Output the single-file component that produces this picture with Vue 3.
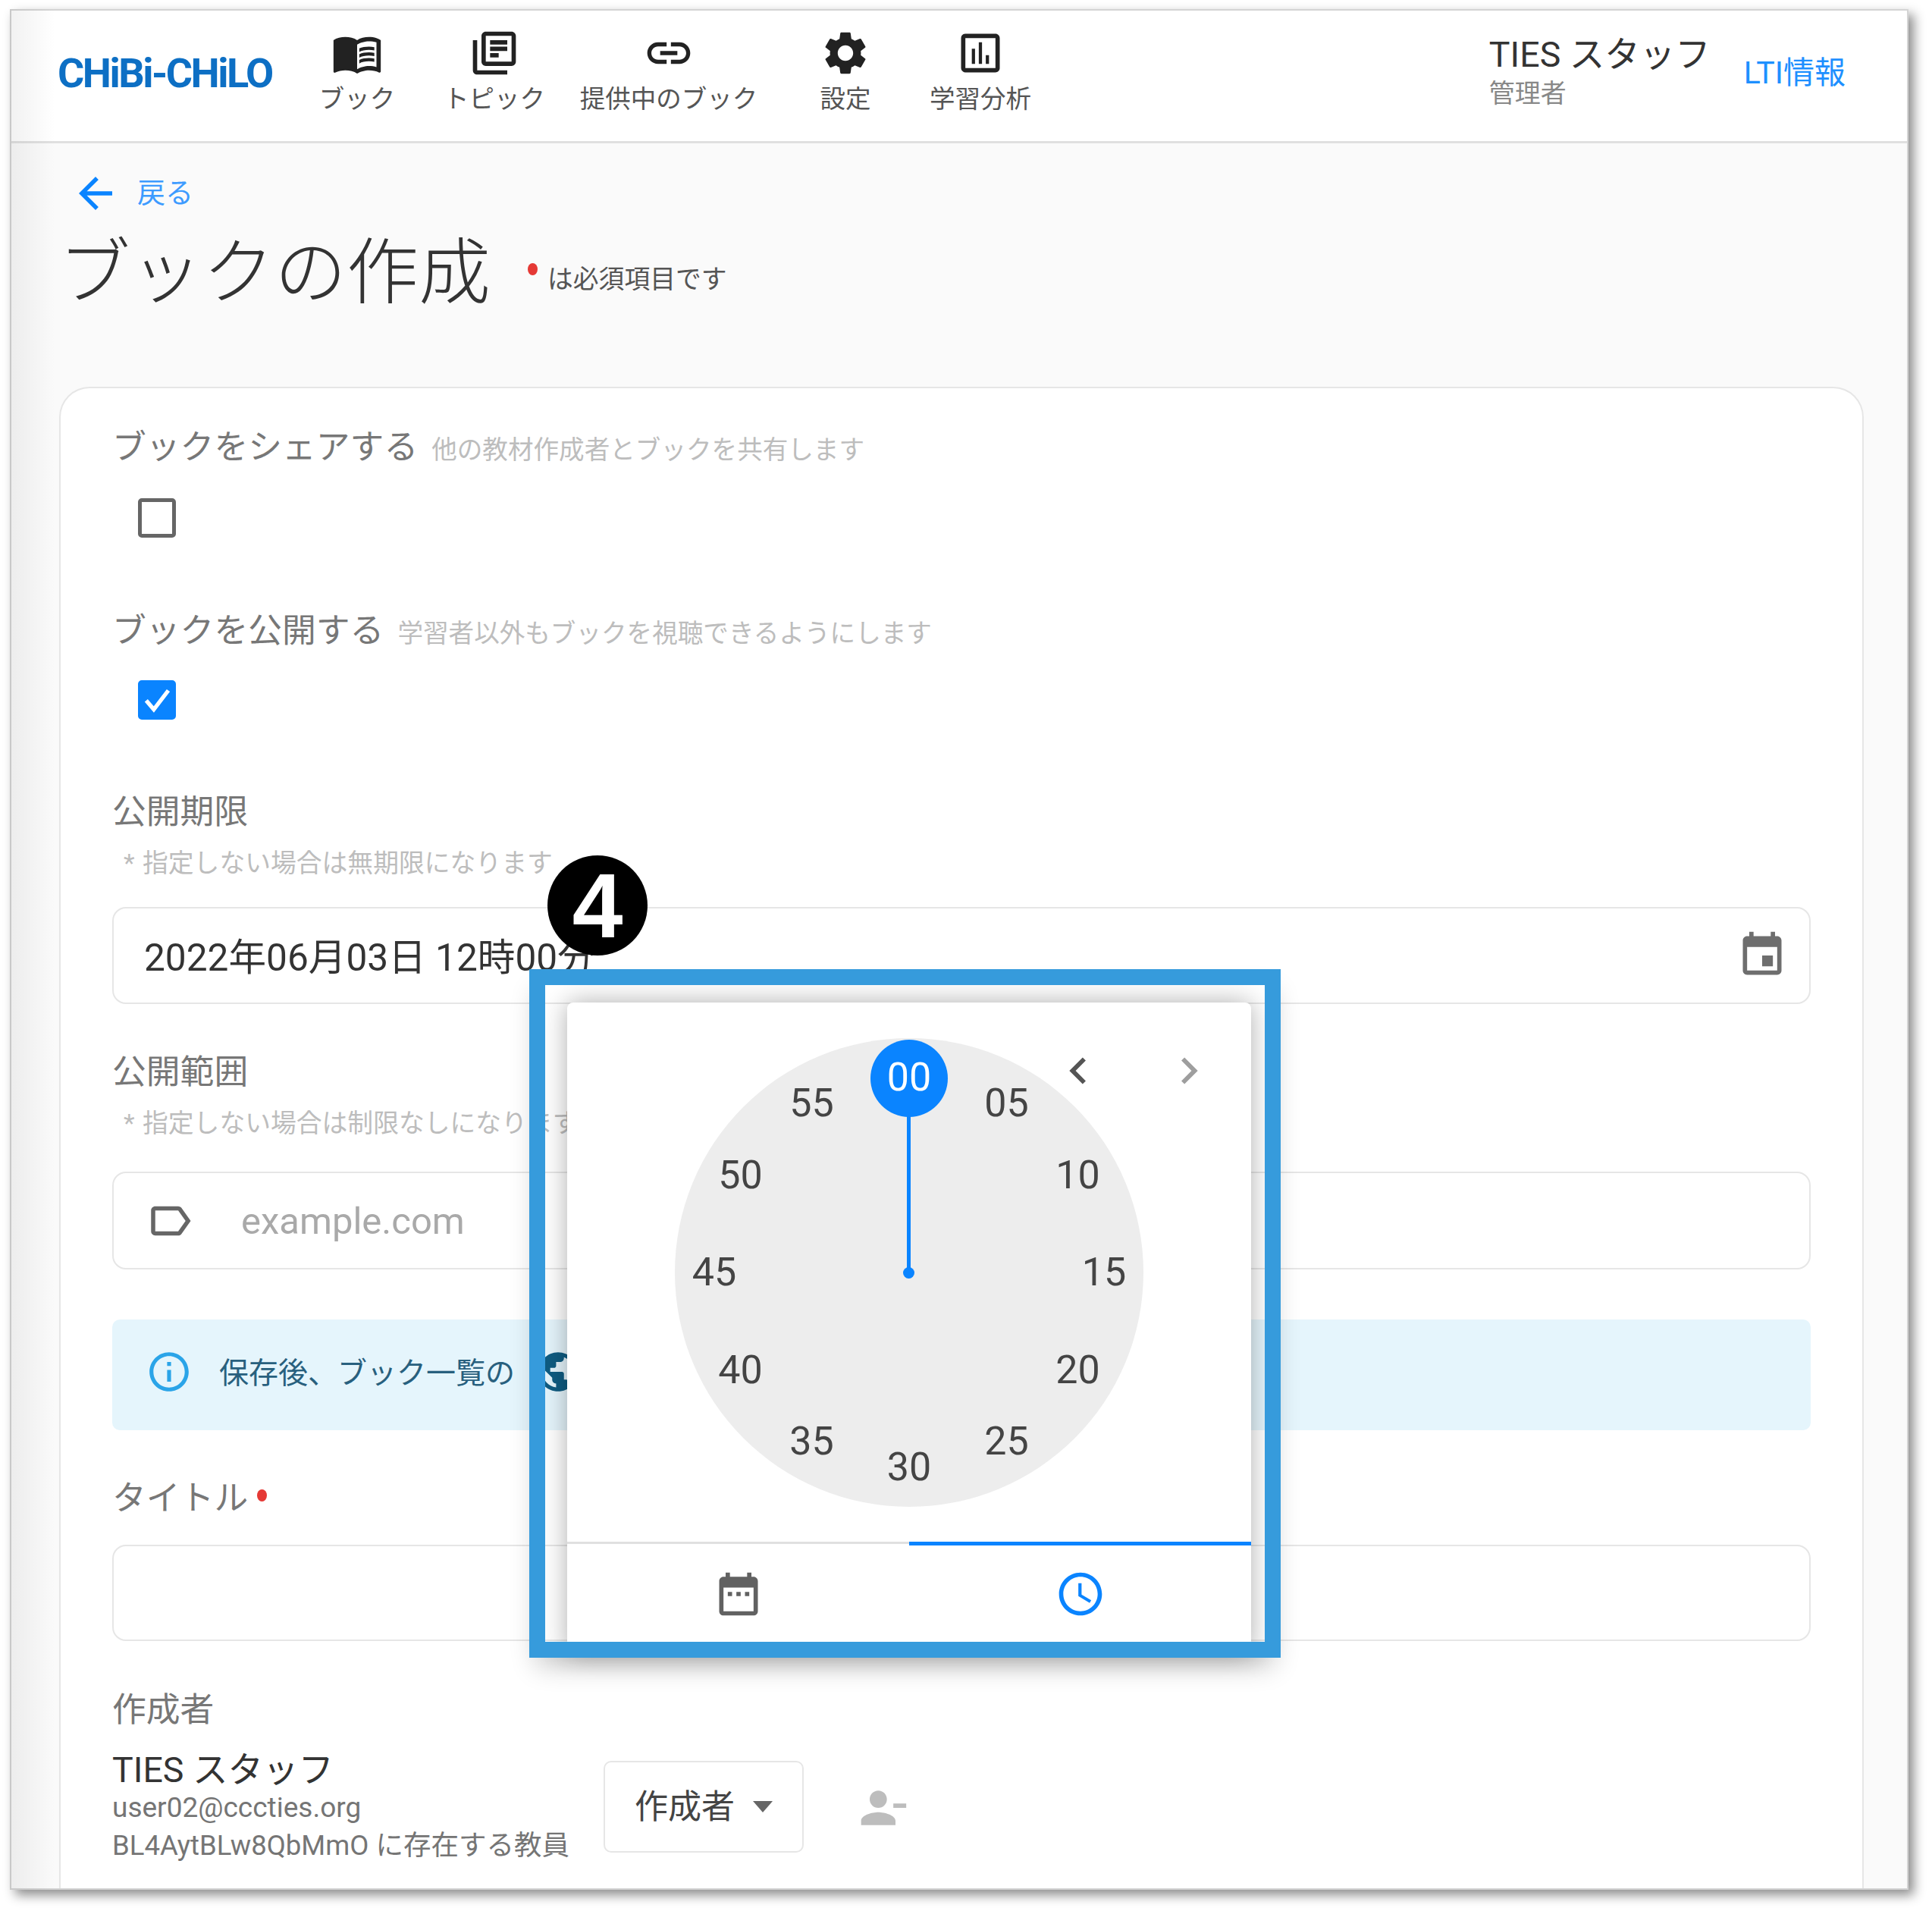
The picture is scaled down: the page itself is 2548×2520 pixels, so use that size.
<script setup>
const nav = [
  { label: 'ブック', d: ['M21 5c-1.11-.35-2.33-.5-3.5-.5-1.95 0-4.05.4-5.5 1.5-1.45-1.1-3.55-1.5-5.5-1.5S2.45 4.9 1 6v14.65c0 .25.25.5.5.5.1 0 .15-.05.25-.05C3.1 20.45 5.05 20 6.5 20c1.95 0 4.05.4 5.5 1.5 1.35-.85 3.8-1.5 5.5-1.5 1.65 0 3.35.3 4.75 1.05.1.05.15.05.25.05.25 0 .5-.25.5-.5V6c-.6-.45-1.25-.75-2-1zm0 13.5c-1.1-.35-2.3-.5-3.5-.5-1.7 0-4.15.65-5.5 1.5V8c1.35-.85 3.8-1.5 5.5-1.5 1.2 0 2.4.15 3.5.5v11.5z', 'M17.5 10.5c.88 0 1.73.09 2.5.26V9.24c-.79-.15-1.64-.24-2.5-.24-1.7 0-3.24.29-4.5.83v1.66c1.13-.64 2.7-.99 4.5-.99zM13 12.49v1.66c1.13-.64 2.7-.99 4.5-.99.88 0 1.73.09 2.5.26V11.9c-.79-.15-1.64-.24-2.5-.24-1.7 0-3.24.3-4.5.83zM17.5 14.33c-1.7 0-3.24.29-4.5.83v1.66c1.13-.64 2.7-.99 4.5-.99.88 0 1.73.09 2.5.26v-1.52c-.79-.16-1.64-.24-2.5-.24z'] },
  { label: 'トピック', d: ['M4 6H2v14c0 1.1.9 2 2 2h14v-2H4V6zm16-4H8c-1.1 0-2 .9-2 2v12c0 1.1.9 2 2 2h12c1.1 0 2-.9 2-2V4c0-1.1-.9-2-2-2zm0 14H8V4h12v12zM10 9h8v2h-8zm0 3h4v2h-4zm0-6h8v2h-8z'] },
  { label: '提供中のブック', d: ['M3.9 12c0-1.71 1.39-3.1 3.1-3.1h4V7H7c-2.76 0-5 2.24-5 5s2.24 5 5 5h4v-1.9H7c-1.71 0-3.1-1.39-3.1-3.1zM8 13h8v-2H8v2zm9-6h-4v1.9h4c1.71 0 3.1 1.39 3.1 3.1s-1.39 3.1-3.1 3.1h-4V17h4c2.76 0 5-2.24 5-5s-2.24-5-5-5z'] },
  { label: '設定', d: ['M19.14 12.94c.04-.3.06-.61.06-.94 0-.32-.02-.64-.07-.94l2.03-1.58c.18-.14.23-.41.12-.61l-1.92-3.32c-.12-.22-.37-.29-.59-.22l-2.39.96c-.5-.38-1.03-.7-1.62-.94l-.36-2.54c-.04-.24-.24-.41-.48-.41h-3.84c-.24 0-.43.17-.47.41l-.36 2.54c-.59.24-1.13.57-1.62.94l-2.39-.96c-.22-.08-.47 0-.59.22L2.74 8.87c-.12.21-.08.47.12.61l2.03 1.58c-.05.3-.09.63-.09.94s.02.64.07.94l-2.03 1.58c-.18.14-.23.41-.12.61l1.92 3.32c.12.22.37.29.59.22l2.39-.96c.5.38 1.03.7 1.62.94l.36 2.54c.05.24.24.41.48.41h3.84c.24 0 .44-.17.47-.41l.36-2.54c.59-.24 1.13-.56 1.62-.94l2.39.96c.22.08.47 0 .59-.22l1.92-3.32c.12-.22.07-.47-.12-.61l-2.01-1.58zM12 15.6c-1.98 0-3.6-1.62-3.6-3.6s1.62-3.6 3.6-3.6 3.6 1.62 3.6 3.6-1.62 3.6-3.6 3.6z'] },
  { label: '学習分析', d: ['M9.5 17H8v-7h1.5v7zm3.25 0h-1.5V7h1.5v10zM16 17h-1.5v-4H16v4zm3 2H5V5h14v14zm0-16H5c-1.1 0-2 .9-2 2v14c0 1.1.9 2 2 2h14c1.1 0 2-.9 2-2V5c0-1.1-.9-2-2-2z'] }
]

const R = 257
const CX = 309
const CY = 309
const minutes = ['00', '05', '10', '15', '20', '25', '30', '35', '40', '45', '50', '55'].map((text, i) => {
  const a = (i * 30 * Math.PI) / 180
  return {
    text,
    style: { left: `${CX + R * Math.sin(a)}px`, top: `${CY - R * Math.cos(a)}px` }
  }
})
</script>

<template>
  <div class="page">
    <div class="window">
      <header class="header">
        <div class="logo">CHiBi-CHiLO</div>
        <nav class="nav">
          <a v-for="item in nav" :key="item.label" class="nav-item">
            <svg class="nav-icon" viewBox="0 0 24 24"><path v-for="p in item.d" :key="p" :d="p" /></svg>
            <span class="nav-label">{{ item.label }}</span>
          </a>
        </nav>
        <div class="user">
          <div class="user-name">TIES スタッフ</div>
          <div class="user-role">管理者</div>
        </div>
        <a class="lti">LTI情報</a>
      </header>

      <main class="body">
        <div class="back">
          <svg class="back-icon" viewBox="0 0 24 24"><path d="M20 11H7.83l5.59-5.59L12 4l-8 8 8 8 1.41-1.41L7.83 13H20v-2z" /></svg>
          <span>戻る</span>
        </div>
        <div class="title-row">
          <h1 class="title">ブックの作成</h1>
          <span class="req-dot title-dot"></span>
          <span class="req-note">は必須項目です</span>
        </div>

        <section class="card">
          <div class="label first">ブックをシェアする<span class="sub">他の教材作成者とブックを共有します</span></div>
          <div class="checkbox check-one"></div>

          <div class="label second">ブックを公開する<span class="sub">学習者以外もブックを視聴できるようにします</span></div>
          <div class="checkbox checked">
            <svg viewBox="0 0 24 24"><path d="M3.5 12.5l6 7L21 4.5" /></svg>
          </div>

          <div class="label third">公開期限</div>
          <div class="note"><span class="ast">*</span>指定しない場合は無期限になります</div>
          <div class="input date-input">
            <span class="value">2022年06月03日 12時00分</span>
            <svg class="event-icon" viewBox="0 0 24 24"><path d="M17 12h-5v5h5v-5zM16 1v2H8V1H6v2H5c-1.11 0-1.99.9-1.99 2L3 19c0 1.1.89 2 2 2h14c1.1 0 2-.9 2-2V5c0-1.1-.9-2-2-2h-1V1h-2zm3 18H5V8h14v11z" /></svg>
          </div>

          <div class="label fourth">公開範囲</div>
          <div class="note"><span class="ast">*</span>指定しない場合は制限なしになります</div>
          <div class="input domain-input">
            <svg class="tag-icon" viewBox="0 0 24 24"><path d="M17.63 5.84C17.27 5.33 16.67 5 16 5L5 5.01C3.9 5.01 3 5.9 3 7v10c0 1.1.9 1.99 2 1.99L16 19c.67 0 1.27-.33 1.63-.84L22 12l-4.37-6.16zM16 17H5V7h11l3.55 5L16 17z" /></svg>
            <span class="placeholder">example.com</span>
          </div>

          <div class="alert">
            <svg class="info-icon" viewBox="0 0 24 24"><path d="M11 7h2v2h-2zm0 4h2v6h-2zm1-9C6.48 2 2 6.48 2 12s4.48 10 10 10 10-4.48 10-10S17.52 2 12 2zm0 18c-4.41 0-8-3.59-8-8s3.59-8 8-8 8 3.59 8 8-3.59 8-8 8z" /></svg>
            <span>保存後、ブック一覧の</span>
            <svg class="globe-icon" viewBox="0 0 24 24"><path d="M12 2C6.48 2 2 6.48 2 12s4.48 10 10 10 10-4.48 10-10S17.52 2 12 2zm-1 17.93c-3.95-.49-7-3.85-7-7.93 0-.62.08-1.21.21-1.79L9 15v1c0 1.1.9 2 2 2v1.93zm6.9-2.54c-.26-.81-1-1.39-1.9-1.39h-1v-3c0-.55-.45-1-1-1H8v-2h2c.55 0 1-.45 1-1V7h2c1.1 0 2-.9 2-2v-.41c2.93 1.19 5 4.06 5 7.41 0 2.08-.8 3.97-2.1 5.39z" /></svg>
          </div>

          <div class="label fifth">タイトル<span class="req-dot label-dot"></span></div>
          <div class="input title-input"></div>

          <div class="label sixth">作成者</div>
          <div class="member">
            <div class="member-info">
              <div class="member-name">TIES スタッフ</div>
              <div class="member-mail">user02@cccties.org</div>
              <div class="member-org">BL4AytBLw8QbMmO に存在する教員</div>
            </div>
            <div class="select">
              <span>作成者</span>
              <span class="caret"></span>
            </div>
            <svg class="remove-icon" viewBox="0 0 24 24"><path d="M14 8c0-2.21-1.79-4-4-4S6 5.79 6 8s1.79 4 4 4 4-1.79 4-4zm3 2v2h6v-2h-6zM2 18v2h16v-2c0-2.66-5.33-4-8-4s-8 1.34-8 4z" /></svg>
          </div>
        </section>
      </main>

      <div class="picker">
        <div class="dial-area">
          <div class="dial">
            <div class="needle"></div>
            <div class="pivot"></div>
            <div class="selected"></div>
            <span
              v-for="m in minutes"
              :key="m.text"
              class="minute"
              :class="{ on: m.text === '00' }"
              :style="m.style"
            >{{ m.text }}</span>
          </div>
          <svg class="chev chev-l" viewBox="0 0 24 24"><path d="M15.41 7.41L14 6l-6 6 6 6 1.41-1.41L10.83 12z" /></svg>
          <svg class="chev chev-r" viewBox="0 0 24 24"><path d="M8.59 16.59L10 18l6-6-6-6-1.41 1.41L13.17 12z" /></svg>
        </div>
        <div class="tabs">
          <div class="tab">
            <svg class="tab-icon" viewBox="0 0 24 24"><path d="M9 11H7v2h2v-2zm4 0h-2v2h2v-2zm4 0h-2v2h2v-2zm2-7h-1V2h-2v2H8V2H6v2H5c-1.11 0-1.99.9-1.99 2L3 20c0 1.1.89 2 2 2h14c1.1 0 2-.9 2-2V6c0-1.1-.9-2-2-2zm0 16H5V9h14v11z" /></svg>
          </div>
          <div class="tab active">
            <svg class="tab-icon" viewBox="0 0 24 24"><path d="M11.99 2C6.47 2 2 6.48 2 12s4.47 10 9.99 10C17.52 22 22 17.52 22 12S17.52 2 11.99 2zM12 20c-4.42 0-8-3.58-8-8s3.58-8 8-8 8 3.58 8 8-3.58 8-8 8zm.5-13H11v6l5.25 3.15.75-1.23-4.5-2.67z" /></svg>
          </div>
        </div>
      </div>

      <div class="frame"></div>
      <div class="badge">4</div>
    </div>
  </div>
</template>

<style>
html, body { margin: 0; background: #fff; }
</style>

<style scoped>
.page {
  width: 2548px;
  height: 2520px;
  padding: 12px 0 0 13px;
  box-sizing: border-box;
  overflow: hidden;
  font-family: Roboto, "Noto Sans CJK JP", sans-serif;
  color: #333;
}
.window {
  position: relative;
  width: 2504px;
  height: 2480px;
  background: #fafafa;
  outline: 2px solid #d4d4d4;
  outline-offset: -2px;
  box-shadow: 7px 7px 14px rgba(0, 0, 0, .45);
}
.window::before {
  content: "";
  position: absolute;
  z-index: 2;
  left: 0;
  top: 0;
  bottom: 0;
  width: 60px;
  background: linear-gradient(to right, rgba(0, 0, 0, .055), rgba(0, 0, 0, 0));
  pointer-events: none;
}
.header {
  display: flex;
  align-items: flex-start;
  height: 177px;
  box-sizing: border-box;
  padding-left: 63px;
  background: #fff;
  border-bottom: 3px solid #e0e0e0;
}
.logo {
  width: 315px;
  margin-top: 55px;
  font-size: 54px;
  line-height: 60px;
  font-weight: 700;
  letter-spacing: -2.5px;
  color: #0d6fc4;
  white-space: nowrap;
}
.nav {
  display: grid;
  grid-template-columns: 160px 202px 258px 208px 148px;
}
.nav-item { display: flex; flex-direction: column; align-items: center; padding-top: 24px; }
.nav-icon { width: 68px; height: 68px; fill: #222; display: block; }
.nav-label { font-size: 33.5px; line-height: 44px; margin-top: 5px; color: #555; white-space: nowrap; }
.user { margin-left: auto; padding-top: 31px; }
.user-name { font-size: 46.5px; line-height: 58px; color: #333; white-space: nowrap; }
.user-role { font-size: 34px; line-height: 36px; color: #888; margin-top: 4px; }
.lti { margin: 58px 83px 0 44px; font-size: 41px; line-height: 52px; color: #1e90ff; white-space: nowrap; }

.body { display: block; }
.back {
  display: flex;
  align-items: center;
  height: 50px;
  margin-top: 38px;
  padding-left: 80px;
  font-size: 37px;
  color: #3d9bff;
}
.back-icon { width: 66px; height: 66px; fill: #0a84ff; margin: 5px 22px 0 0; flex: none; }
.title-row { display: flex; align-items: center; height: 110px; margin: 29px 0 0 64px; }
.title { margin: 0; font-size: 95px; line-height: 110px; font-weight: 300; color: #333; white-space: nowrap; }
.req-dot { display: inline-block; background: #e53935; border-radius: 50%; }
.title-dot { width: 13px; height: 16px; margin: -13px 0 0 49px; }
.req-note { margin: 8px 0 0 13px; font-size: 33.8px; color: #555; white-space: nowrap; }

.card {
  box-sizing: border-box;
  height: 1980px;
  margin: 94px 59px 0 65px;
  padding: 0 68px;
  background: #fff;
  border: 2px solid #e6e6e6;
  border-bottom: 0;
  border-radius: 40px 40px 0 0;
}
.label { font-size: 44.8px; line-height: 60px; color: #777; white-space: nowrap; }
.first { margin-top: 48px; }
.second { margin-top: 92.5px; }
.third { margin-top: 92.5px; }
.fourth { margin-top: 60px; }
.fifth { margin-top: 60px; }
.sixth { margin-top: 61px; }
.sub { margin-left: 18px; font-size: 33.6px; line-height: 1; color: #bdbdbd; }
.checkbox {
  box-sizing: border-box;
  width: 50px;
  height: 52px;
  margin: 35px 0 0 34px;
  border: 5px solid #666;
  border-radius: 5px;
}
.check-one { margin-top: 37px; }
.checkbox.checked { border-color: #0a84ff; background: #0a84ff; }
.checkbox svg { display: block; width: 40px; height: 42px; fill: none; stroke: #fff; stroke-width: 3.2; }
.note { margin-top: 13px; padding-left: 15px; font-size: 33.8px; line-height: 50px; color: #bdbdbd; white-space: nowrap; }
.ast { display: inline-block; width: 25px; }
.input {
  box-sizing: border-box;
  display: flex;
  align-items: center;
  height: 128px;
  border: 2px solid #e6e6e6;
  border-radius: 18px;
}
.date-input { margin-top: 32px; }
.domain-input { margin-top: 38px; height: 129px; }
.title-input { margin-top: 30.5px; height: 127px; }
.value { margin: 0 0 5px 40px; font-size: 49.6px; color: #333; white-space: nowrap; }
.event-icon { width: 68px; height: 68px; margin-left: auto; margin-right: 28px; fill: #6e6e6e; }
.tag-icon { width: 66px; height: 66px; margin-left: 41px; fill: #666; }
.placeholder { margin: 2px 0 0 61px; font-size: 49px; color: #a9a9a9; }
.alert {
  display: flex;
  align-items: center;
  box-sizing: border-box;
  height: 146px;
  margin-top: 66px;
  padding: 0 0 8px 44px;
  background: #e5f5fc;
  border-radius: 10px;
  font-size: 39px;
  color: #28607e;
  white-space: nowrap;
}
.alert span { margin-bottom: 4px; }
.info-icon { width: 62px; height: 62px; fill: #2aa4e8; margin-right: 35px; flex: none; }
.globe-icon { width: 62px; height: 62px; fill: #0f5c82; margin-left: 26px; flex: none; }
.label-dot { width: 13px; height: 16px; margin: 0 0 14px 12px; vertical-align: middle; }
.member { display: flex; align-items: flex-start; margin-top: 21px; }
.member-info { width: 648px; flex: none; white-space: nowrap; }
.member-name { font-size: 46.5px; line-height: 56px; color: #333; }
.member-mail { font-size: 37px; line-height: 46px; color: #757575; margin-top: -1px; }
.member-org { font-size: 36.5px; line-height: 50px; color: #757575; margin-top: 2px; }
.select {
  box-sizing: border-box;
  display: flex;
  align-items: center;
  width: 264px;
  height: 121px;
  margin-top: 16px;
  padding: 0 0 6px 39px;
  border: 2px solid #e6e6e6;
  border-radius: 10px;
  font-size: 44px;
  color: #444;
}
.caret {
  width: 0;
  height: 0;
  margin: 6px 0 0 24px;
  border: 13px solid transparent;
  border-top: 15px solid #666;
  border-bottom: 0;
}
.remove-icon { width: 68px; height: 68px; margin: 44px 0 0 70px; fill: #bdbdbd; }

.picker {
  position: absolute;
  z-index: 3;
  left: 735px;
  top: 1310px;
  width: 902px;
  height: 860px;
  display: flex;
  flex-direction: column;
  background: #fff;
  border-radius: 8px;
  box-shadow: 0 0 34px rgba(0, 0, 0, .32);
}
.dial-area { position: relative; height: 711px; flex: none; }
.dial {
  position: absolute;
  left: 142px;
  top: 47px;
  width: 618px;
  height: 618px;
  border-radius: 50%;
  background: #ededed;
}
.needle { position: absolute; left: 306px; top: 52px; width: 5px; height: 257px; background: #0a84ff; }
.pivot { position: absolute; left: 301px; top: 302px; width: 15px; height: 15px; border-radius: 50%; background: #0a84ff; }
.selected { position: absolute; left: 258px; top: 2px; width: 102px; height: 102px; border-radius: 50%; background: #0a84ff; }
.minute {
  position: absolute;
  transform: translate(-50%, -50%);
  font-size: 52px;
  line-height: 60px;
  color: #444;
}
.minute.on { color: #fff; }
.chev { position: absolute; top: 55px; width: 70px; height: 70px; }
.chev-l { left: 639px; fill: #555; }
.chev-r { left: 785px; fill: #9e9e9e; }
.tabs { display: flex; flex: 1; }
.tab {
  flex: 1;
  display: flex;
  justify-content: center;
  padding-top: 32px;
  border-top: 3px solid #e0e0e0;
}
.tab.active { border-top: 5px solid #0a84ff; padding-top: 30px; }
.tab-icon { width: 68px; height: 68px; fill: #616161; }
.tab.active .tab-icon { fill: #0a84ff; }
.frame {
  position: absolute;
  z-index: 4;
  left: 685px;
  top: 1266px;
  width: 991px;
  height: 908px;
  box-sizing: border-box;
  border: 21px solid #369bdc;
  box-shadow: 0 20px 32px -8px rgba(0, 0, 0, .2);
}
.badge {
  position: absolute;
  z-index: 5;
  left: 709px;
  top: 1116px;
  width: 132px;
  height: 132px;
  border-radius: 50%;
  background: #000;
  color: #fff;
  font-family: "Liberation Sans", sans-serif;
  font-weight: 700;
  font-size: 120px;
  line-height: 132px;
  text-align: center;
}
</style>
